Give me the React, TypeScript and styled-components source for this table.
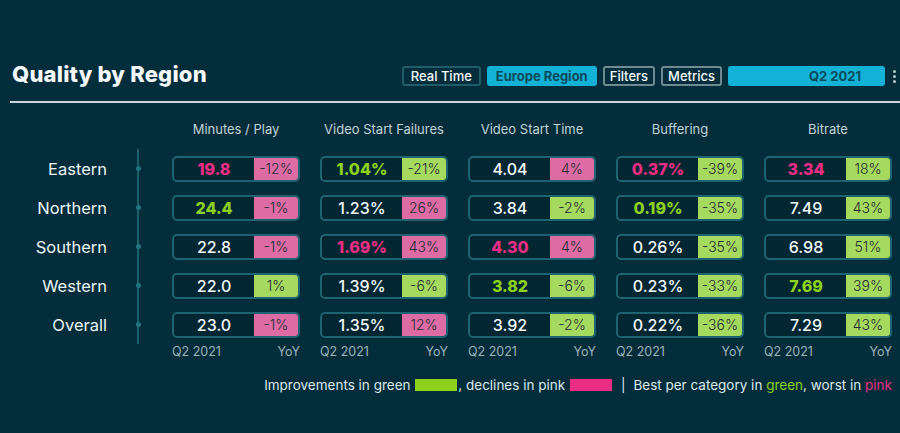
import React, { FC } from 'react';
import styled, { createGlobalStyle } from 'styled-components';

type Rank = 'best' | 'worst' | undefined;
type Trend = 'up' | 'down';

interface Metric {
  value: string;
  rank?: Rank;
  yoy: string;
  trend: Trend;
}

interface RegionRow {
  name: string;
  metrics: Metric[];
}

const palette = {
  bg: '#032d3b',
  text: '#eef3f5',
  muted: '#c4d2d6',
  faint: '#9fb3b9',
  border: '#1d6470',
  cyan: '#11b2d5',
  pinkFill: '#dd6ca4',
  greenFill: '#a6d95f',
  pink: '#ec2d83',
  green: '#8dd11c',
};

const columns = [
  'Minutes / Play',
  'Video Start Failures',
  'Video Start Time',
  'Buffering',
  'Bitrate',
];

const rows: RegionRow[] = [
  {
    name: 'Eastern',
    metrics: [
      { value: '19.8', rank: 'worst', yoy: '-12%', trend: 'down' },
      { value: '1.04%', rank: 'best', yoy: '-21%', trend: 'up' },
      { value: '4.04', yoy: '4%', trend: 'down' },
      { value: '0.37%', rank: 'worst', yoy: '-39%', trend: 'up' },
      { value: '3.34', rank: 'worst', yoy: '18%', trend: 'up' },
    ],
  },
  {
    name: 'Northern',
    metrics: [
      { value: '24.4', rank: 'best', yoy: '-1%', trend: 'down' },
      { value: '1.23%', yoy: '26%', trend: 'down' },
      { value: '3.84', yoy: '-2%', trend: 'up' },
      { value: '0.19%', rank: 'best', yoy: '-35%', trend: 'up' },
      { value: '7.49', yoy: '43%', trend: 'up' },
    ],
  },
  {
    name: 'Southern',
    metrics: [
      { value: '22.8', yoy: '-1%', trend: 'down' },
      { value: '1.69%', rank: 'worst', yoy: '43%', trend: 'down' },
      { value: '4.30', rank: 'worst', yoy: '4%', trend: 'down' },
      { value: '0.26%', yoy: '-35%', trend: 'up' },
      { value: '6.98', yoy: '51%', trend: 'up' },
    ],
  },
  {
    name: 'Western',
    metrics: [
      { value: '22.0', yoy: '1%', trend: 'up' },
      { value: '1.39%', yoy: '-6%', trend: 'up' },
      { value: '3.82', rank: 'best', yoy: '-6%', trend: 'up' },
      { value: '0.23%', yoy: '-33%', trend: 'up' },
      { value: '7.69', rank: 'best', yoy: '39%', trend: 'up' },
    ],
  },
  {
    name: 'Overall',
    metrics: [
      { value: '23.0', yoy: '-1%', trend: 'down' },
      { value: '1.35%', yoy: '12%', trend: 'down' },
      { value: '3.92', yoy: '-2%', trend: 'up' },
      { value: '0.22%', yoy: '-36%', trend: 'up' },
      { value: '7.29', yoy: '43%', trend: 'up' },
    ],
  },
];

const GlobalStyle = createGlobalStyle`
  html, body {
    margin: 0;
    padding: 0;
    background: ${palette.bg};
  }
  body {
    font-family: Inter, "Noto Sans", sans-serif;
    color: ${palette.text};
  }
`;

const App: FC = () => (
  <>
    <GlobalStyle />
    <Page>
      <Header>
        <Title>Quality by Region</Title>
        <Toolbar>
          <ToolButton variant="teal">Real Time</ToolButton>
          <ToolButton variant="filled">Europe Region</ToolButton>
          <ToolButton variant="grey">Filters</ToolButton>
          <ToolButton variant="grey">Metrics</ToolButton>
          <PeriodPicker>Q2 2021</PeriodPicker>
          <MoreDots>
            <span />
            <span />
            <span />
          </MoreDots>
        </Toolbar>
      </Header>
      <Divider />
      <Table>
        <Corner />
        <Corner />
        {columns.map((c) => (
          <ColumnTitle key={c}>{c}</ColumnTitle>
        ))}
        {rows.map((row) => (
          <React.Fragment key={row.name}>
            <RegionName>{row.name}</RegionName>
            <Rail>
              <RailDot />
            </Rail>
            {row.metrics.map((m, i) => (
              <CellWrap key={i}>
                <Cell>
                  <Value rank={m.rank}>{m.value}</Value>
                  <Yoy trend={m.trend}>{m.yoy}</Yoy>
                </Cell>
              </CellWrap>
            ))}
          </React.Fragment>
        ))}
        <Corner />
        <Corner />
        {columns.map((c) => (
          <FootLabels key={c}>
            <span>Q2 2021</span>
            <span>YoY</span>
          </FootLabels>
        ))}
      </Table>
      <Legend>
        Improvements in green <Swatch color={palette.green} />, declines in pink{' '}
        <Swatch color={palette.pink} />
        <Bar>|</Bar>
        Best per category in <Colored color={palette.green}>green</Colored>, worst in{' '}
        <Colored color={palette.pink}>pink</Colored>
      </Legend>
    </Page>
  </>
);

const Page = styled.div`
  width: 900px;
  height: 433px;
  overflow: hidden;
  padding-top: 58px;
  box-sizing: border-box;
`;

const Header = styled.div`
  display: flex;
  align-items: center;
  justify-content: space-between;
  height: 32px;
  padding-left: 12px;
`;

const Title = styled.h1`
  margin: 0;
  font-size: 22px;
  font-weight: 800;
  letter-spacing: 0.2px;
  color: #f4f8f9;
`;

const Toolbar = styled.div`
  display: flex;
  align-items: center;
  gap: 6px;
  padding-top: 4px;
`;

const ToolButton = styled.div<{ variant: 'teal' | 'filled' | 'grey' }>`
  height: 20px;
  box-sizing: border-box;
  padding: 0 ${(p) => (p.variant === 'grey' ? 5 : 7)}px;
  display: flex;
  align-items: center;
  font-size: 13px;
  border-radius: 3px;
  border: 2px solid
    ${(p) =>
      p.variant === 'teal' ? '#1f5d69' : p.variant === 'grey' ? '#6f8a92' : palette.cyan};
  background: ${(p) => (p.variant === 'filled' ? palette.cyan : 'transparent')};
  color: ${(p) => (p.variant === 'filled' ? '#0a4a5d' : '#f4f8f9')};
  font-weight: ${(p) => (p.variant === 'filled' ? 700 : 500)};
`;

const PeriodPicker = styled.div`
  width: 157px;
  height: 20px;
  box-sizing: border-box;
  border-radius: 3px;
  background: ${palette.cyan};
  color: #0a4a5d;
  font-size: 13px;
  font-weight: 700;
  display: flex;
  align-items: center;
  justify-content: flex-end;
  padding-right: 24px;
`;

const MoreDots = styled.div`
  display: flex;
  flex-direction: column;
  gap: 2px;
  padding: 0 4px 0 2px;

  span {
    width: 3px;
    height: 3px;
    border-radius: 50%;
    background: #b7c6cb;
  }
`;

const Divider = styled.div`
  margin: 11px 0 0 10px;
  height: 2px;
  background: #c9d3d9;
`;

const Table = styled.div`
  display: grid;
  grid-template-columns: 107px 25px repeat(5, 128px);
  grid-template-rows: 31px repeat(5, 39px) auto;
  column-gap: 20px;
  margin-top: 15px;
`;

const Corner = styled.div``;

const ColumnTitle = styled.div`
  font-size: 13px;
  color: ${palette.muted};
  text-align: center;
  line-height: 22px;
  white-space: nowrap;
`;

const RegionName = styled.div`
  display: flex;
  align-items: center;
  justify-content: flex-end;
  font-size: 16.5px;
  color: ${palette.text};
`;

const Rail = styled.div`
  width: 2px;
  margin-left: 10px;
  background: #1a5f6a;
  display: flex;
  align-items: center;
  justify-content: center;
`;

const RailDot = styled.div`
  width: 5px;
  height: 5px;
  flex-shrink: 0;
  border-radius: 50%;
  background: #237480;
`;

const CellWrap = styled.div`
  display: flex;
  align-items: center;
`;

const Cell = styled.div`
  display: flex;
  width: 128px;
  height: 26px;
  box-sizing: border-box;
  border: 2px solid ${palette.border};
  border-radius: 5px;
  overflow: hidden;
  background: #022632;
`;

const Value = styled.div<{ rank?: Rank }>`
  flex: 1;
  display: flex;
  align-items: center;
  justify-content: center;
  font-size: 16px;
  font-weight: ${(p) => (p.rank ? 800 : 500)};
  color: ${(p) =>
    p.rank === 'best' ? palette.green : p.rank === 'worst' ? palette.pink : '#f4f8f9'};
`;

const Yoy = styled.div<{ trend: Trend }>`
  width: 44px;
  margin: -2px -2px -2px 0;
  padding-right: 2px;
  display: flex;
  align-items: center;
  justify-content: center;
  font-size: 14px;
  font-weight: 300;
  color: #1f2c32;
  background: ${(p) => (p.trend === 'up' ? palette.greenFill : palette.pinkFill)};
`;

const FootLabels = styled.div`
  display: flex;
  justify-content: space-between;
  font-size: 12.5px;
  color: ${palette.faint};
  line-height: 16px;
`;

const Legend = styled.div`
  display: flex;
  align-items: center;
  justify-content: flex-end;
  margin-top: 17px;
  padding-right: 8px;
  font-size: 13.5px;
  color: #dfe7ea;
  white-space: pre;
`;

const Swatch = styled.span<{ color: string }>`
  display: inline-block;
  width: 42px;
  height: 12px;
  margin: 0 1px;
  background: ${(p) => p.color};
`;

const Bar = styled.span`
  margin: 0 8px 0 8px;
`;

const Colored = styled.span<{ color: string }>`
  color: ${(p) => p.color};
`;

export default App;
